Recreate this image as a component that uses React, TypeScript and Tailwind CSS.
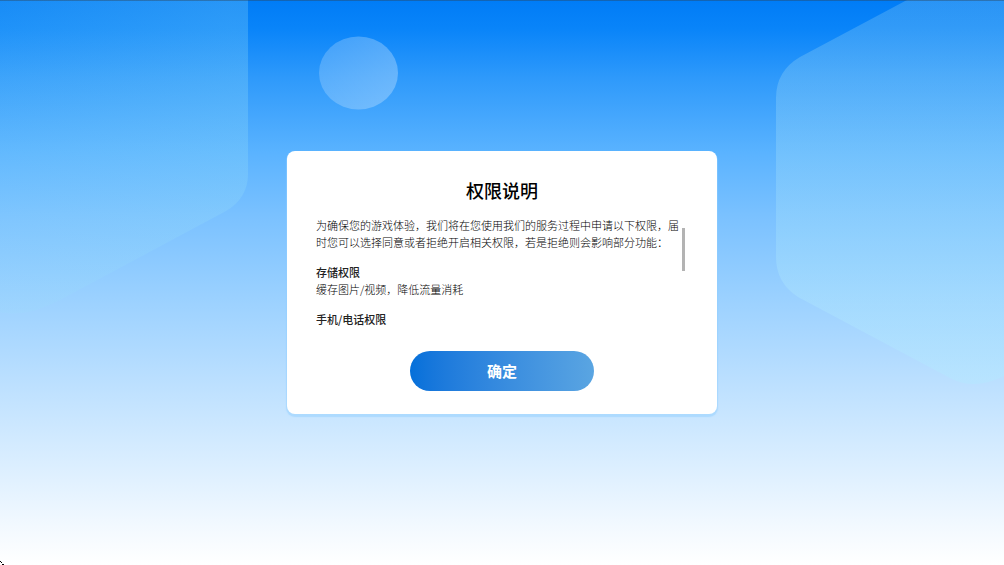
const permissions = [
  { name: '存储权限', detail: '缓存图片/视频，降低流量消耗' },
  { name: '手机/电话权限', detail: '' },
];

function Backdrop() {
  return (
    <svg
      aria-hidden="true"
      className="absolute inset-0 h-full w-full"
      viewBox="0 0 1004 565"
      preserveAspectRatio="none"
    >
      <defs>
        <linearGradient id="left-shape" gradientUnits="userSpaceOnUse" x1="-160" y1="200" x2="250" y2="100">
          <stop offset="0" stopColor="#98e0f8" stopOpacity="0.06" />
          <stop offset="1" stopColor="#98e0f8" stopOpacity="0.26" />
        </linearGradient>
        <linearGradient id="right-shape" gradientUnits="userSpaceOnUse" x1="900" y1="0" x2="900" y2="385">
          <stop offset="0" stopColor="#a0d8f4" stopOpacity="0.26" />
          <stop offset="0.6" stopColor="#a8e4fc" stopOpacity="0.34" />
          <stop offset="1" stopColor="#b4e8ff" stopOpacity="0.5" />
        </linearGradient>
        <linearGradient id="bubble" x1="0" y1="0" x2="1" y2="0">
          <stop offset="0" stopColor="#ffffff" stopOpacity="0.2" />
          <stop offset="1" stopColor="#ffffff" stopOpacity="0.28" />
        </linearGradient>
      </defs>
      <path d="M0 0H248V174Q248 198 226 211L60 300Q25 318 0 312Z" fill="url(#left-shape)" />
      <path
        d="M907 0L800 57Q776 71 776 98V257Q776 283 798 297L950 378Q974 391 1004 376V0Z"
        fill="url(#right-shape)"
      />
      <ellipse cx="358.5" cy="73" rx="39.5" ry="36.5" fill="url(#bubble)" />
      <rect width="1004" height="1" fill="#304050" fillOpacity="0.4" />
    </svg>
  );
}

export default function App() {
  return (
    <main
      lang="zh-CN"
      className="relative flex min-h-screen items-center justify-center overflow-hidden bg-[linear-gradient(to_bottom,#007cf6_0%,#0984f9_5%,#2f9afb_14%,#5ab3ff_27%,#7ac1ff_38%,#99d0ff_52%,#b8deff_66%,#d4ebff_79%,#f2f9ff_93%,#ffffff_100%)] font-['Noto_Sans_CJK_SC',sans-serif]"
    >
      <Backdrop />

      <section
        aria-labelledby="permission-title"
        className="relative flex w-[430px] max-w-full flex-col items-center rounded-lg bg-white px-[29px] pt-[25px] pb-[23px] shadow-[0_2px_1px_1px_rgba(145,208,255,0.5)]"
      >
        <h1 id="permission-title" className="text-lg leading-7 font-medium text-black">
          权限说明
        </h1>

        <div className="relative mt-[13px] h-[110px] w-full overflow-hidden text-[11px] leading-[17px] font-light text-black">
          <p>
            为确保您的游戏体验，我们将在您使用我们的服务过程中申请以下权限，届时您可以选择同意或者拒绝开启相关权限，若是拒绝则会影响部分功能：
          </p>
          {permissions.map((item) => (
            <div key={item.name} className="mt-[13px]">
              <h2 className="font-medium text-[#222222]">{item.name}</h2>
              {item.detail && <p>{item.detail}</p>}
            </div>
          ))}
          <span aria-hidden="true" className="absolute top-[11px] right-[3px] h-[43px] w-[3px] bg-[#b3b3b3]" />
        </div>

        <button
          type="button"
          className="mt-6 h-10 w-[184px] rounded-full bg-linear-to-r from-[#0470da] to-[#5aa5e2] text-[15px] font-bold text-white"
        >
          确定
        </button>
      </section>

      <svg aria-hidden="true" className="absolute bottom-0 left-0 h-1 w-1" viewBox="0 0 4 4" shapeRendering="crispEdges">
        <path d="M0 0h1v1H0zM1 1h1v1H1zM2 3h1v1H2zM3 3h1v1H3z" fill="#000000" />
      </svg>
    </main>
  );
}
